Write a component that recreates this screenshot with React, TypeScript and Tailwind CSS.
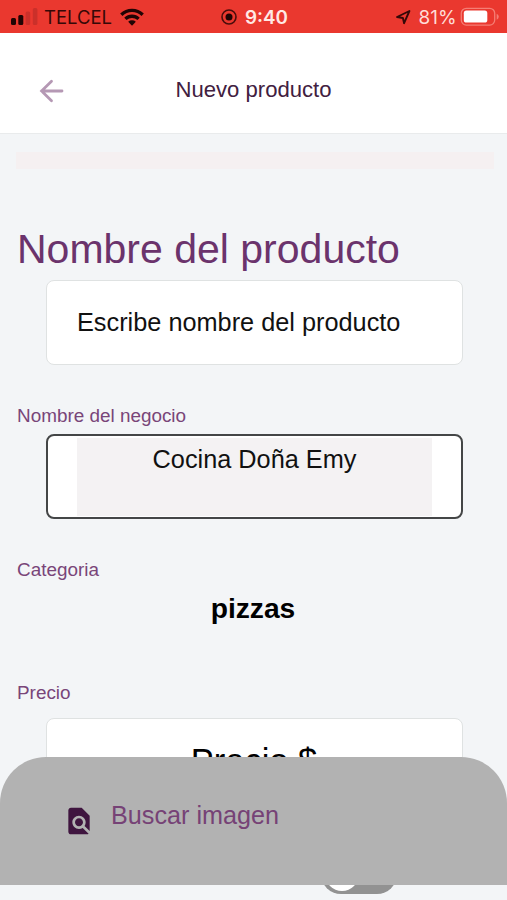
import React from "react";
import { MdFindInPage } from "react-icons/md";

type FieldProps = {
  label: string;
  labelClass?: string;
  className?: string;
  children: React.ReactNode;
};

const StatusBar: React.FC = () => (
  <div className="h-[33px] shrink-0 bg-[#ea382f] flex items-center font-[Inter,sans-serif]">
    <svg width="150" height="33" viewBox="0 0 150 33" className="shrink-0">
      {/* signal */}
      <rect x="11" y="18" width="5" height="7" rx="1.5" fill="#210404" />
      <rect x="18.3" y="15" width="5" height="10" rx="1.5" fill="#210404" />
      <rect x="25.6" y="11.5" width="4.6" height="13.5" rx="1.5" fill="#cb302a" />
      <rect x="32.8" y="8" width="4.6" height="17" rx="1.5" fill="#cb302a" />
      <text x="44" y="23.8" fontSize="18.4" textLength="68" lengthAdjust="spacingAndGlyphs" fill="#360807">
        TELCEL
      </text>
      {/* wifi */}
      <g fill="none" stroke="#210404" strokeWidth="3.3">
        <path d="M121.3 14.7a15.3 15.3 0 0 1 21.4 0" />
        <path d="M125.4 18.9a9.5 9.5 0 0 1 13.2 0" />
      </g>
      <path d="M128.2 21.7a5.6 5.6 0 0 1 7.6 0L132 25.7z" fill="#210404" />
    </svg>
    <div className="ml-[71px] flex items-center gap-[7px]">
      <svg width="16" height="16" viewBox="0 0 16 16" className="mt-px">
        <circle cx="8" cy="8" r="7" fill="none" stroke="#4a0d0b" strokeWidth="1.6" />
        <circle cx="8" cy="8" r="3.5" fill="#210404" />
      </svg>
      <svg width="46" height="33" viewBox="0 0 46 33">
        <text x="1" y="24" fontSize="18.5" fontWeight="600" textLength="43" lengthAdjust="spacingAndGlyphs" fill="#ffe9e5">
          9:40
        </text>
      </svg>
    </div>
    <svg width="112" height="33" viewBox="0 0 112 33" className="ml-auto shrink-0">
      <path d="M2 17 14.4 11 9.1 23.2 7.9 18z" fill="none" stroke="#360807" strokeWidth="1.9" strokeLinejoin="round" />
      <text x="23.5" y="23.8" fontSize="18.4" textLength="38" lengthAdjust="spacingAndGlyphs" fill="#ffdcd7">
        81%
      </text>
      <rect x="66.3" y="8.3" width="33.4" height="16.8" rx="5" fill="none" stroke="#f57d74" strokeWidth="1.3" />
      <rect x="68.8" y="10.6" width="23.5" height="12" rx="2.6" fill="#fff" />
      <path d="M101.7 13.7a3.2 3.2 0 0 1 0 6z" fill="#f57d74" />
    </svg>
  </div>
);

const Header: React.FC = () => (
  <header className="h-[101px] shrink-0 grid grid-cols-[1fr_auto_1fr] items-center bg-white border-b border-[#e9ebec]">
    <button type="button" aria-label="Volver" className="ml-[39px] mt-[15px] w-6">
      <svg width="26" height="24" viewBox="0 0 26 24" fill="none" stroke="#b598b4" strokeWidth="2.8" strokeLinecap="round">
        <path d="M23 12H2.6M12.5 2.2 2.6 12l9.9 9.8" />
      </svg>
    </button>
    <h1 className="mt-[14px] text-[22.1px] leading-7 text-[#412040]">Nuevo producto</h1>
  </header>
);

const Field: React.FC<FieldProps> = ({
  label,
  labelClass = "text-[18.9px] leading-6 text-[#794579]",
  className = "",
  children,
}) => (
  <div className={className}>
    <div className={labelClass}>{label}</div>
    {children}
  </div>
);

const ImageSheet: React.FC = () => (
  <div className="absolute inset-x-0 top-[757px] h-[128px] rounded-t-[46px] bg-[#b2b2b2] flex items-start">
    <MdFindInPage size={32} className="ml-[63px] mt-12 text-[#3f153f]" />
    <span className="ml-4 mt-[42px] text-[25.2px] leading-8 text-[#764276]">Buscar imagen</span>
  </div>
);

const App: React.FC = () => (
  <div className="relative w-full h-[900px] overflow-hidden flex flex-col bg-[#f3f5f7] font-['Liberation_Sans',Arial,sans-serif]">
    <StatusBar />
    <Header />

    <main className="flex flex-col">
      <div className="mt-[18px] ml-4 mr-[13px] h-[17px] bg-[#f5f0f1]" />

      <Field
        label="Nombre del producto"
        labelClass="text-[41px] leading-[48px] text-[#6b336c]"
        className="mt-14 pl-[17px]"
      >
        <div className="mt-[7px] ml-[29px] w-[417px] h-[85px] pl-[30px] flex items-center rounded-[8px] border border-[#dfe2e2] bg-white text-[25.3px] text-[#111]">
          Escribe nombre del producto
        </div>
      </Field>

      <Field label="Nombre del negocio" className="mt-[39px] pl-[17px]">
        <div className="mt-[6px] ml-[29px] w-[417px] h-[85px] px-[29px] pt-[2px] pb-px rounded-[8px] border-2 border-[#444647] bg-white">
          <div className="h-full pt-[5px] bg-[#f4f2f3] text-center text-[25.3px] leading-8 text-[#111]">
            Cocina Doña Emy
          </div>
        </div>
      </Field>

      <Field label="Categoria" className="mt-[39px] pl-[17px]">
        <div className="mt-[10px] mr-[18px] text-center text-[28.2px] leading-8 font-bold text-black">
          pizzas
        </div>
      </Field>

      <Field label="Precio" className="mt-[57px] pl-[17px]">
        <div className="mt-[13px] ml-[29px] w-[417px] h-[85px] pr-px pt-[3px] flex items-center justify-center rounded-[8px] border border-[#dfe2e2] bg-white text-[34.5px] text-black">
          Precio $
        </div>
      </Field>

      {/* toggle, mostly hidden behind the sheet */}
      <div className="mt-[51px] ml-[321px] w-[76px] h-[40px] pl-[4px] flex items-center rounded-full bg-[#929292]">
        <div className="w-[34px] h-[34px] rounded-full bg-white" />
      </div>
    </main>

    <ImageSheet />
  </div>
);

export default App;
